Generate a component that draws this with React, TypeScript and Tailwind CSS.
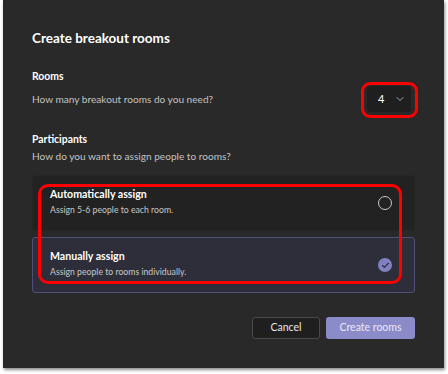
import { ChevronDown, Check } from "lucide-react";

const font = { fontFamily: 'Lato, "Open Sans", sans-serif' };

const Option = ({
  title,
  desc,
  selected,
}: {
  title: string;
  desc: string;
  selected?: boolean;
}) => (
  <div
    className={
      "flex items-center justify-between h-[56px] pl-[17px] pr-[22px] rounded-[3px] border " +
      (selected
        ? "bg-[#2e2e3a] border-[#4f4f78]"
        : "bg-[#222222] border-[#262626]")
    }
  >
    <div className="flex flex-col self-start pt-[11px]">
      <p className="text-[10.6px] font-bold text-white leading-[14px]">{title}</p>
      <p className="text-[8.7px] text-[#c8c8c8] leading-[12px] mt-[3px]">{desc}</p>
    </div>
    {selected ? (
      <div className="w-[14px] h-[14px] rounded-full bg-[#8080c0] flex items-center justify-center">
        <Check className="w-[9px] h-[9px] text-[#2b2b40]" strokeWidth={3} />
      </div>
    ) : (
      <div className="w-[14px] h-[14px] rounded-full border border-[#c8c8c8]" />
    )}
  </div>
);

export default function App() {
  return (
    <div className="w-[448px] h-[374px] bg-white overflow-hidden" style={font}>
      <div className="relative ml-[3px] w-[441px] h-[368px] bg-[#292929] shadow-[1px_2px_3px_rgba(0,0,0,0.45)] pl-[29px] pr-[29px] pt-[28px]">
        <h1 className="text-[13.5px] font-bold text-white leading-[20px]">
          Create breakout rooms
        </h1>

        <p className="mt-[21px] text-[10.4px] font-bold text-white leading-[14px]">Rooms</p>
        <div className="flex items-center justify-between mt-[3px] h-[26px]">
          <p className="text-[10.1px] text-[#c3c3c3] leading-[14px]">
            How many breakout rooms do you need?
          </p>
          <div className="w-[44px] h-[26px] bg-[#1f1f1f] rounded-[3px] flex items-center justify-between pl-[11px] pr-[5px] mr-[4px]">
            <span className="text-[11px] text-white">4</span>
            <ChevronDown className="w-[12px] h-[12px] text-[#d0d0d0]" strokeWidth={1.5} />
          </div>
        </div>

        <p className="mt-[20px] text-[10.4px] font-bold text-white leading-[14px]">Participants</p>
        <p className="mt-[3px] text-[10.1px] text-[#c3c3c3] leading-[14px]">
          How do you want to assign people to rooms?
        </p>

        <div className="mt-[12px] flex flex-col gap-[6px]">
          <Option title="Automatically assign" desc="Assign 5-6 people to each room." />
          <Option
            title="Manually assign"
            desc="Assign people to rooms individually."
            selected
          />
        </div>

        <div className="flex justify-end gap-[6px] mt-[24px]">
          <button className="w-[68px] h-[22px] rounded-[3px] bg-[#1f1f1f] border border-[#4a4a4a] text-[10.5px] text-[#e6e6e6]">
            Cancel
          </button>
          <button className="w-[89px] h-[22px] rounded-[3px] bg-[#8b8bc9] text-[10.5px] text-[#e9e9f5]">
            Create rooms
          </button>
        </div>

        {/* red annotation boxes */}
        <div className="absolute left-[358px] top-[82px] w-[57px] h-[36px] rounded-[9px] border-[3px] border-[#ff0000]" />
        <div className="absolute left-[35px] top-[184px] w-[364px] h-[100px] rounded-[10px] border-[3px] border-[#ff0000]" />
      </div>
    </div>
  );
}
